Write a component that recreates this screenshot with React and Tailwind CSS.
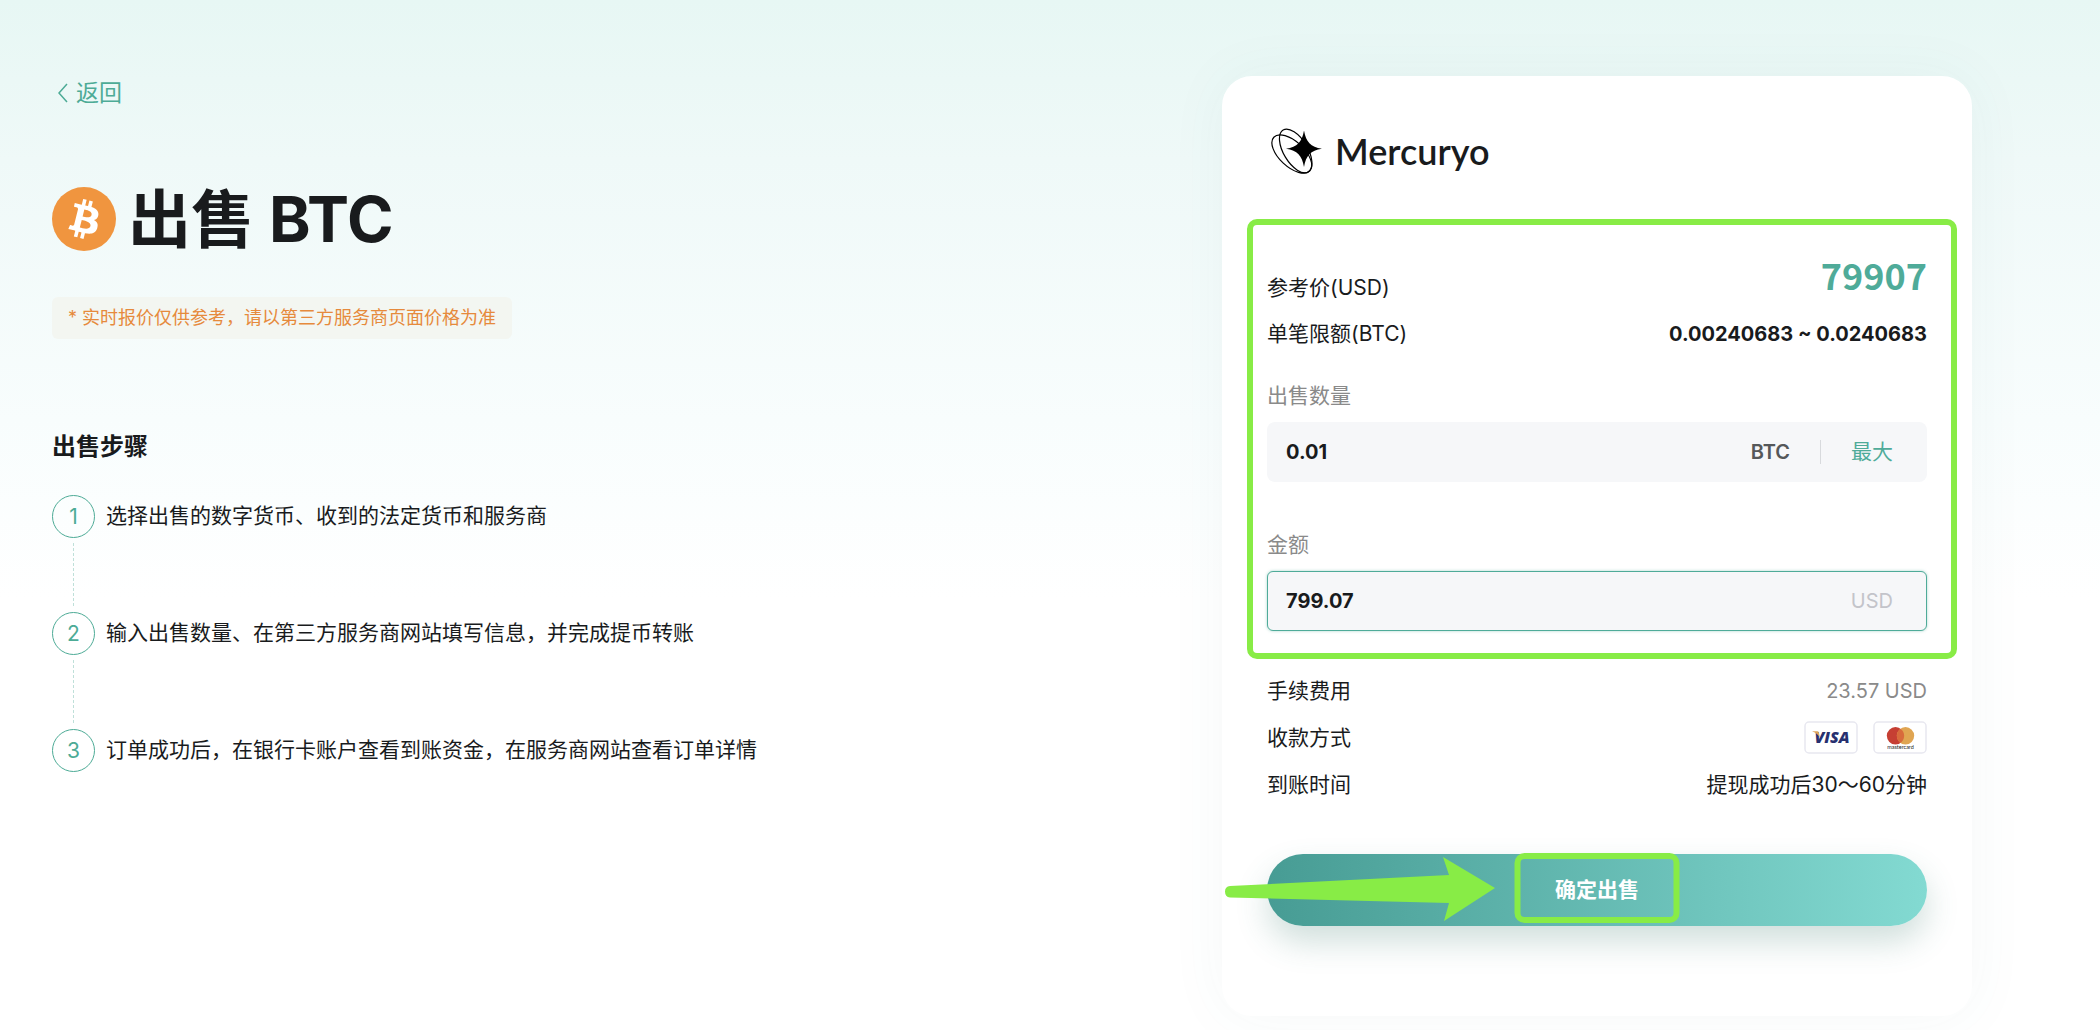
import React, { useState } from 'react';

const steps = [
  '选择出售的数字货币、收到的法定货币和服务商',
  '输入出售数量、在第三方服务商网站填写信息，并完成提币转账',
  '订单成功后，在银行卡账户查看到账资金，在服务商网站查看订单详情',
];

const BitcoinIcon = () => (
  <svg viewBox="0 0 32 32" className="h-16 w-16 shrink-0" aria-hidden="true">
    <circle cx="16" cy="16" r="16" fill="#f0953f" />
    <path
      fill="#fff"
      d="M23.189 14.02c.314-2.096-1.283-3.223-3.465-3.975l.708-2.84-1.728-.43-.69 2.765c-.454-.114-.92-.22-1.385-.326l.695-2.783L15.596 6l-.708 2.839c-.376-.086-.746-.17-1.104-.26l.002-.009-2.384-.595-.46 1.846s1.283.294 1.256.312c.7.175.826.638.805 1.006l-.806 3.235c.048.012.11.03.18.057l-.183-.045-1.13 4.532c-.086.212-.303.531-.793.41.018.025-1.256-.313-1.256-.313l-.858 1.978 2.25.561c.418.105.828.215 1.231.318l-.715 2.872 1.727.43.708-2.84c.472.127.93.245 1.378.357l-.706 2.828 1.728.43.715-2.866c2.948.558 5.164.333 6.097-2.333.752-2.146-.037-3.385-1.588-4.192 1.13-.26 1.98-1.003 2.207-2.538zm-3.95 5.538c-.533 2.147-4.148.986-5.32.695l.95-3.805c1.172.293 4.929.872 4.37 3.11zm.535-5.569c-.487 1.953-3.495.96-4.47.717l.86-3.45c.975.243 4.118.696 3.61 2.733z"
    />
  </svg>
);

const MercuryoLogo = () => (
  <svg viewBox="0 0 56 48" className="h-12 w-14 shrink-0" aria-hidden="true">
    <g fill="none" stroke="#000" strokeWidth="1.2">
      <ellipse cx="24.8" cy="27" rx="12.5" ry="24.6" transform="rotate(-47 24.8 27)" />
      <ellipse cx="28.7" cy="24" rx="12" ry="24.4" transform="rotate(-31 28.7 24)" />
    </g>
    <path d="M37 3.500C39 15 43.500 20 55 21.700C43.500 23.500 39 28.500 37 40C35 28.500 30.500 23.500 19 21.700C30.500 20 35 15 37 3.500Z" />
  </svg>
);

const VisaIcon = () => (
  <svg viewBox="0 0 54 33" className="h-[33px] w-[54px]" role="img" aria-label="Visa">
    <rect x="1" y="1" width="52" height="31" rx="4" fill="#fff" stroke="#e8e8f0" strokeWidth="1.5" />
    <text x="28" y="22" textAnchor="middle" fontSize="16" fontWeight="800" fontStyle="italic" fill="#27306f" fontFamily="Open Sans, sans-serif">VISA</text>
    <path d="M8 10.200h5.500q1 0 1.200 1l1.200 5.500q-2-4.500-7.900-6.500z" fill="#e0a458" />
  </svg>
);

const MastercardIcon = () => (
  <svg viewBox="0 0 54 33" className="h-[33px] w-[54px]" role="img" aria-label="Mastercard">
    <rect x="1" y="1" width="52" height="31" rx="4" fill="#fff" stroke="#e8e8f0" strokeWidth="1.5" />
    <circle cx="22.5" cy="14.800" r="8.700" fill="#c63f33" />
    <circle cx="32.5" cy="14.800" r="8.700" fill="#e0a552" />
    <path d="M27.500 7.700a8.700 8.700 0 0 1 0 14.200a8.700 8.700 0 0 1 0-14.200z" fill="#d86a3c" />
    <text x="27.500" y="28" textAnchor="middle" fontSize="5.500" fill="#222" fontFamily="Lato, sans-serif">mastercard</text>
  </svg>
);

const InfoRow = ({ label, children }) => (
  <div className="flex h-[47px] items-center justify-between">
    <dt>{label}</dt>
    <dd>{children}</dd>
  </div>
);

const App = () => {
  const price = 79907;
  const [amount, setAmount] = useState('0.01');
  const [total, setTotal] = useState('799.07');

  const handleAmountChange = (value) => {
    setAmount(value);
    setTotal((Number(value) * price).toFixed(2));
  };

  const handleTotalChange = (value) => {
    setTotal(value);
    setAmount(String(Number(value) / price));
  };

  return (
    <main className="flex min-h-screen items-start justify-between gap-12 bg-[linear-gradient(180deg,#e7f7f4_0px,#eff9f8_160px,#f8fdfd_420px,#ffffff_600px)] pt-[76px] pr-32 pb-[14px] pl-[52px] font-['Inter','Noto_Sans_CJK_SC',sans-serif] text-[21px] leading-6 text-[#191b1d]">
      {/* 左侧说明 */}
      <section className="pt-[5px]">
        <a href="#" className="flex w-fit items-center gap-2 pl-1.5 text-[23px] text-[#4dab96]">
          <svg viewBox="0 0 10 20" className="h-5 w-2.5" fill="none" stroke="currentColor" strokeWidth="1.5" aria-hidden="true">
            <path d="M9 1L1 10L9 19" />
          </svg>
          返回
        </a>

        <h1 className="mt-[82px] flex h-16 items-center gap-3 text-[63px] leading-[60px] font-bold">
          <BitcoinIcon />
          出售 BTC
        </h1>

        <p className="mt-[46px] flex h-[42px] w-fit items-center rounded-md bg-[#f3f6f1] px-4 text-lg text-[#e68a3c]">
          * 实时报价仅供参考，请以第三方服务商页面价格为准
        </p>

        <h2 className="mt-[92px] text-2xl leading-8 font-bold">出售步骤</h2>
        <ol className="mt-8">
          {steps.map((step, index) => (
            <li key={step} className="flex gap-[11px]">
              <div className="flex flex-col items-center">
                <span className="flex h-[43px] w-[43px] items-center justify-center rounded-full border border-[#4dab96] text-[#4dab96]">
                  {index + 1}
                </span>
                {index < steps.length - 1 && (
                  <span className="mt-[5px] mb-[6px] h-[63px] border-l border-dashed border-[#bfe0d9]" />
                )}
              </div>
              <p className="leading-[42px]">{step}</p>
            </li>
          ))}
        </ol>
      </section>

      {/* 出售表单 */}
      <form
        onSubmit={(e) => e.preventDefault()}
        className="w-full max-w-[750px] rounded-[30px] bg-white px-[45px] pt-[51px] pb-[90px] shadow-[0_0_60px_rgba(60,120,120,0.05)]"
      >
        <div className="flex h-12 items-center gap-3 font-['Lato',sans-serif] text-4xl font-semibold">
          <MercuryoLogo />
          Mercuryo
        </div>

        <div className="relative mt-11 pt-[33px] pb-7">
          <div className="flex h-12 items-end justify-between">
            <span>参考价(USD)</span>
            <strong className="self-start font-['Noto_Sans_CJK_SC',sans-serif] text-4xl leading-[44px] text-[#4fab99]">{price}</strong>
          </div>
          <div className="mt-[22px] flex justify-between">
            <span>单笔限额(BTC)</span>
            <strong className="text-xl leading-6">0.00240683 ~ 0.0240683</strong>
          </div>

          <label htmlFor="amount" className="mt-[38px] block text-[#8a8a8a]">出售数量</label>
          <div className="mt-[14px] flex h-[60px] items-center rounded-lg bg-[#f6f7f9] pr-[34px] pl-[19px]">
            <input
              id="amount"
              type="text"
              value={amount}
              onChange={(e) => handleAmountChange(e.target.value)}
              className="min-w-0 flex-1 bg-transparent text-xl font-bold outline-none"
            />
            <span className="text-xl font-semibold text-[#55585a]">BTC</span>
            <span className="mx-[30px] h-6 border-l border-[#d8dadd]" />
            <button type="button" onClick={() => handleAmountChange('0.0240683')} className="text-[#4fab99]">
              最大
            </button>
          </div>

          <label htmlFor="total" className="mt-[51px] block text-[#8a8a8a]">金额</label>
          <div className="mt-[14px] flex h-[60px] items-center rounded-md border border-[#4fab99] bg-[#f6f7f9] pr-[33px] pl-[18px] shadow-[0_0_3px_rgba(79,171,153,0.5)]">
            <input
              id="total"
              type="text"
              value={total}
              onChange={(e) => handleTotalChange(e.target.value)}
              className="min-w-0 flex-1 bg-transparent text-xl font-bold outline-none"
            />
            <span className="text-xl text-[#c3c4ca]">USD</span>
          </div>

          {/* 标注框 */}
          <div className="pointer-events-none absolute inset-y-0 -right-[30px] -left-5 rounded-[10px] border-[6px] border-[#88ec46]" />
        </div>

        <dl className="mt-2">
          <InfoRow label="手续费用">
            <span className="text-xl text-[#8a8a8a]">23.57 USD</span>
          </InfoRow>
          <InfoRow label="收款方式">
            <span className="flex gap-[15px]">
              <VisaIcon />
              <MastercardIcon />
            </span>
          </InfoRow>
          <InfoRow label="到账时间">提现成功后30～60分钟</InfoRow>
        </dl>

        <div className="relative mt-[46px]">
          <button
            type="submit"
            className="h-[72px] w-full rounded-full bg-linear-to-r from-[#479c94] to-[#83dad2] font-bold text-white shadow-[0_16px_32px_rgba(60,120,110,0.24)]"
          >
            确定出售
          </button>
          <div className="pointer-events-none absolute -top-px left-1/2 h-[70px] w-[165px] -translate-x-1/2 rounded-[10px] border-[6px] border-[#88ec46]" />
          <svg viewBox="0 0 272 72" className="pointer-events-none absolute top-0 -left-[43px] h-[72px] w-[272px]" fill="#88ec46" aria-hidden="true">
            <path d="M6 32L225 21L219 3L271 34L220 67L225 49L6 43.500Q1 43 1 37.500Q1 32.500 6 32Z" />
          </svg>
        </div>
      </form>
    </main>
  );
};

export default App;
